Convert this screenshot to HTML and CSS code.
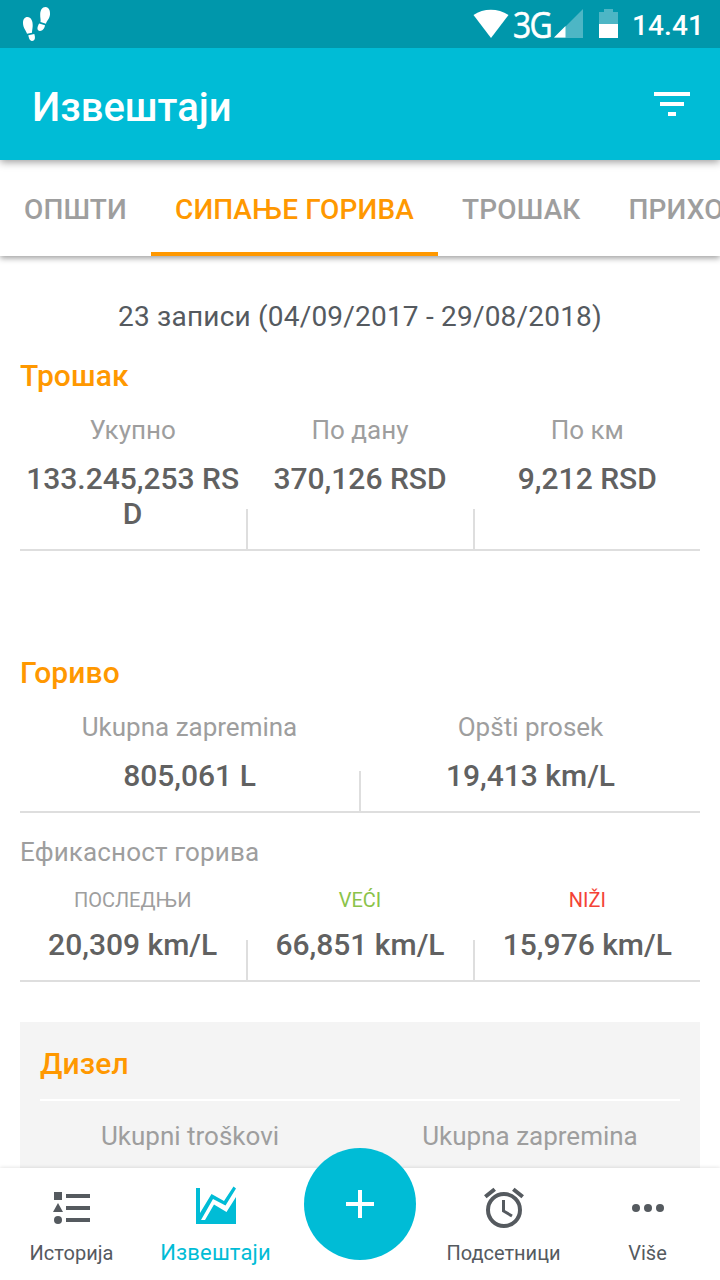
FILE: index.html
```
<!DOCTYPE html>
<html lang="sr">
  <head>
    <meta charset="UTF-8" />
    <meta name="viewport" content="width=device-width, initial-scale=1.0" />
    <title>Извештаји</title>
    <link rel="stylesheet" href="styles.css">
  </head>
  <body>
    <div class="screen">
      <div class="status-bar">
        <svg class="steps" width="29" height="36" viewBox="0 0 29 36" fill="#fff">
          <path d="M5.500 11C9 11 11 15 10.700 20C10.500 23 10 25 10 26.700L5 27.800C4.500 25 1 22 1 17C1 13.500 2.500 11 5.500 11Z" />
          <path d="M6.300 29.300L12.300 28C13.300 31 13.500 35 10 35C7.500 35 6.800 31.500 6.300 29.300Z" />
          <path d="M23.500 1C27 1 28.300 5 28 8.500C27.600 13 24.500 15 24 17.700L18.500 16C19 13.500 18 11.500 18.200 8C18.500 4 20 1 23.500 1Z" />
          <path d="M17.200 17.400L23 19.300C22.500 22.500 20.500 25 18 25C14 24.500 15.500 20 17.200 17.400Z" />
        </svg>
        <div class="status-icons">
          <svg width="36" height="48" viewBox="0 0 36 48" fill="#fff">
            <path d="M0.500 15C10.500 8 25 8 35.500 15L18 38Z" />
          </svg>
          <span class="network">3G</span>
          <svg class="signal" width="30" height="48" viewBox="0 0 30 48">
            <path d="M0 38L29 9V38Z" fill="#4db6c5" />
            <path d="M0 37.500L11.500 26V37.500Z" fill="#fff" />
          </svg>
          <svg class="battery" width="19" height="48" viewBox="0 0 19 48">
            <path d="M0 12H5V9H14V12H19V24H0Z" fill="#4db6c5" />
            <path d="M0 24H19V38H0Z" fill="#fff" />
          </svg>
          <span class="clock">14.41</span>
        </div>
      </div>

      <div class="app-bar">
        <h1>Извештаји</h1>
        <svg width="36" height="24" viewBox="0 0 36 24" fill="#fff">
          <path d="M0 0H36V4H0ZM6 10H30V14H6ZM14 20H22V24H14Z" />
        </svg>
      </div>

      <div class="tabs">
        <div class="tab">ОПШТИ</div>
        <div class="tab active">СИПАЊЕ ГОРИВА</div>
        <div class="tab">ТРОШАК</div>
        <div class="tab">ПРИХОД</div>
      </div>

      <div class="content">
        <p class="records">23 записи (04/09/2017 - 29/08/2018)</p>

        <h2>Трошак</h2>
        <div class="stats cost">
          <div class="stat">
            <div class="label">Укупно</div>
            <div class="value">133.245,253 RSD</div>
          </div>
          <div class="stat">
            <div class="label">По дану</div>
            <div class="value">370,126 RSD</div>
          </div>
          <div class="stat">
            <div class="label">По км</div>
            <div class="value">9,212 RSD</div>
          </div>
        </div>

        <h2>Гориво</h2>
        <div class="stats">
          <div class="stat">
            <div class="label">Ukupna zapremina</div>
            <div class="value">805,061 L</div>
          </div>
          <div class="stat">
            <div class="label">Opšti prosek</div>
            <div class="value">19,413 km/L</div>
          </div>
        </div>

        <h3>Ефикасност горива</h3>
        <div class="stats efficiency">
          <div class="stat">
            <div class="label">ПОСЛЕДЊИ</div>
            <div class="value">20,309 km/L</div>
          </div>
          <div class="stat">
            <div class="label green">VEĆI</div>
            <div class="value">66,851 km/L</div>
          </div>
          <div class="stat">
            <div class="label red">NIŽI</div>
            <div class="value">15,976 km/L</div>
          </div>
        </div>

        <div class="card">
          <h2>Дизел</h2>
          <div class="card-row">
            <div class="label">Ukupni troškovi</div>
            <div class="label">Ukupna zapremina</div>
          </div>
        </div>
      </div>

      <div class="bottom-nav">
        <div class="nav-item">
          <svg width="48" height="48" viewBox="0 0 48 48" fill="currentColor">
            <path d="M6 8H14V16H6ZM10 19L15 28H5ZM18 10H42V14H18ZM18 22H42V26H18ZM18 34H42V38H18Z" />
            <circle cx="10" cy="36" r="4" />
          </svg>
          <span>Историја</span>
        </div>
        <div class="nav-item active">
          <svg width="48" height="48" viewBox="0 0 48 48" fill="currentColor">
            <path d="M4 4H8V29L19.500 10L32 17L41.500 2.500L44 4.500L33.500 21.500L21 15L9 36H13L22 20.500L34.500 28L44 13V40H4Z" />
          </svg>
          <span>Извештаји</span>
        </div>
        <div class="nav-item">
          <div class="add-button">
            <svg width="28" height="28" viewBox="0 0 28 28" fill="#fff">
              <path d="M12 0H16V12H28V16H16V28H12V16H0V12H12Z" />
            </svg>
          </div>
        </div>
        <div class="nav-item">
          <svg width="48" height="48" viewBox="0 0 48 48" fill="none" stroke="currentColor" stroke-width="4">
            <circle cx="24" cy="26" r="16" />
            <path d="M5.300 12.800L14.700 5.200M42.700 12.800L33.300 5.200" />
            <path d="M23.500 16V27L32 32" stroke-width="3" />
          </svg>
          <span>Подсетници</span>
        </div>
        <div class="nav-item">
          <svg width="48" height="48" viewBox="0 0 48 48" fill="currentColor">
            <circle cx="12" cy="24" r="4" />
            <circle cx="24" cy="24" r="4" />
            <circle cx="36" cy="24" r="4" />
          </svg>
          <span>Više</span>
        </div>
      </div>
    </div>
  </body>
</html>
```
FILE: styles.css
```
* {
  box-sizing: border-box;
}
body {
  margin: 0;
  font-family: Roboto, sans-serif;
  background: #fff;
  color: #616161;
}
h1,
h2,
h3,
p {
  margin: 0;
}
svg {
  display: block;
  flex-shrink: 0;
}
.screen {
  width: 720px;
  height: 1280px;
  display: flex;
  flex-direction: column;
  overflow: hidden;
}
.status-bar {
  flex: 0 0 48px;
  display: flex;
  justify-content: space-between;
  align-items: center;
  padding: 0 16px 0 22px;
  background: #0097ab;
  color: #fff;
  z-index: 3;
}
.status-icons {
  display: flex;
  align-items: center;
}
.network {
  width: 37px;
  margin-left: 4px;
  font-family: "Open Sans", sans-serif;
  font-size: 37px;
  line-height: 48px;
  letter-spacing: -2px;
  transform: scaleX(0.86);
  transform-origin: left;
  -webkit-text-stroke: 0.6px #fff;
}
.signal {
  margin-left: 4px;
}
.battery {
  margin-left: 15px;
}
.clock {
  margin-left: 14px;
  padding-top: 2px;
  font-size: 28px;
  font-weight: 500;
  letter-spacing: 0.1px;
}
.app-bar {
  flex: 0 0 112px;
  display: flex;
  justify-content: space-between;
  align-items: center;
  padding: 0 30px 0 32px;
  background: #00bcd6;
  color: #fff;
  box-shadow: 0 2px 8px rgba(0, 0, 0, 0.4);
  z-index: 2;
}
.app-bar h1 {
  font-size: 40px;
  font-weight: 500;
  line-height: 48px;
  padding-top: 8px;
}
.tabs {
  flex: 0 0 96px;
  display: flex;
  background: #fff;
  box-shadow: 0 2px 6px rgba(0, 0, 0, 0.4);
  z-index: 1;
}
.tab {
  flex-shrink: 0;
  padding: 3px 24px 0;
  font-size: 28px;
  font-weight: 500;
  line-height: 93px;
  letter-spacing: 0.15px;
  color: #9e9e9e;
}
.tab.active {
  color: #ff9800;
  box-shadow: inset 0 -4px #ff9800;
}
.content {
  flex: 1;
  min-height: 0;
  padding: 44px 20px 0;
  overflow: hidden;
}
.records {
  font-size: 28px;
  line-height: 33px;
  letter-spacing: 0.2px;
  margin-bottom: 25px;
  text-align: center;
  color: #555a5f;
}
h2 {
  font-size: 30px;
  font-weight: 500;
  line-height: 35px;
  letter-spacing: 0.1px;
  color: #ff9800;
}
h3 {
  margin-top: 24px;
  font-size: 26px;
  font-weight: 400;
  line-height: 31px;
  letter-spacing: 0.15px;
  color: #9e9e9e;
}
.stats {
  display: flex;
  gap: 2px;
  margin-top: 22px;
  border-bottom: 2px solid #dedede;
}
.stats.cost {
  margin-bottom: 104px;
}
.stat {
  position: relative;
  flex: 1;
  min-width: 0;
  padding: 0 5px 18px;
  text-align: center;
}
/* short divider standing on the bottom line */
.stat + .stat::before {
  content: "";
  position: absolute;
  left: -1.6px;
  bottom: 0;
  width: 2px;
  height: 40px;
  background: #dedede;
}
.label {
  font-size: 26px;
  line-height: 31px;
  color: #9e9e9e;
}
.value {
  margin-top: 15px;
  font-size: 30px;
  font-weight: 500;
  line-height: 35px;
  word-break: break-all;
}
.efficiency {
  margin-top: 20px;
}
.efficiency .label {
  font-size: 20px;
  line-height: 24px;
}
.efficiency .label.green {
  color: #8bc34a;
}
.efficiency .label.red {
  color: #f44336;
}
.card {
  height: 300px;
  margin-top: 40px;
  padding: 24px 20px;
  background: #f4f4f4;
}
.card h2 {
  padding-bottom: 18px;
  border-bottom: 2px solid #fff;
}
.card-row {
  display: flex;
  margin: 20px -20px 0;
}
.card-row .label {
  flex: 1;
  text-align: center;
}
.bottom-nav {
  flex: 0 0 112px;
  display: flex;
  background: #fff;
  box-shadow: 0 0 4px rgba(0, 0, 0, 0.15);
  color: #555a5f;
  z-index: 1;
}
.nav-item {
  flex: 1;
  display: flex;
  flex-direction: column;
  align-items: center;
  padding-top: 16px;
}
.nav-item span {
  margin-top: 9px;
  padding-right: 1px;
  font-size: 20px;
  line-height: 24px;
}
.nav-item.active {
  color: #00bcd6;
}
.nav-item.active span {
  font-size: 22px;
  letter-spacing: 0.15px;
}
.add-button {
  flex: none;
  display: flex;
  justify-content: center;
  align-items: center;
  width: 112px;
  height: 112px;
  margin-top: -36px;
  border-radius: 50%;
  background: #00bcd6;
}
```
